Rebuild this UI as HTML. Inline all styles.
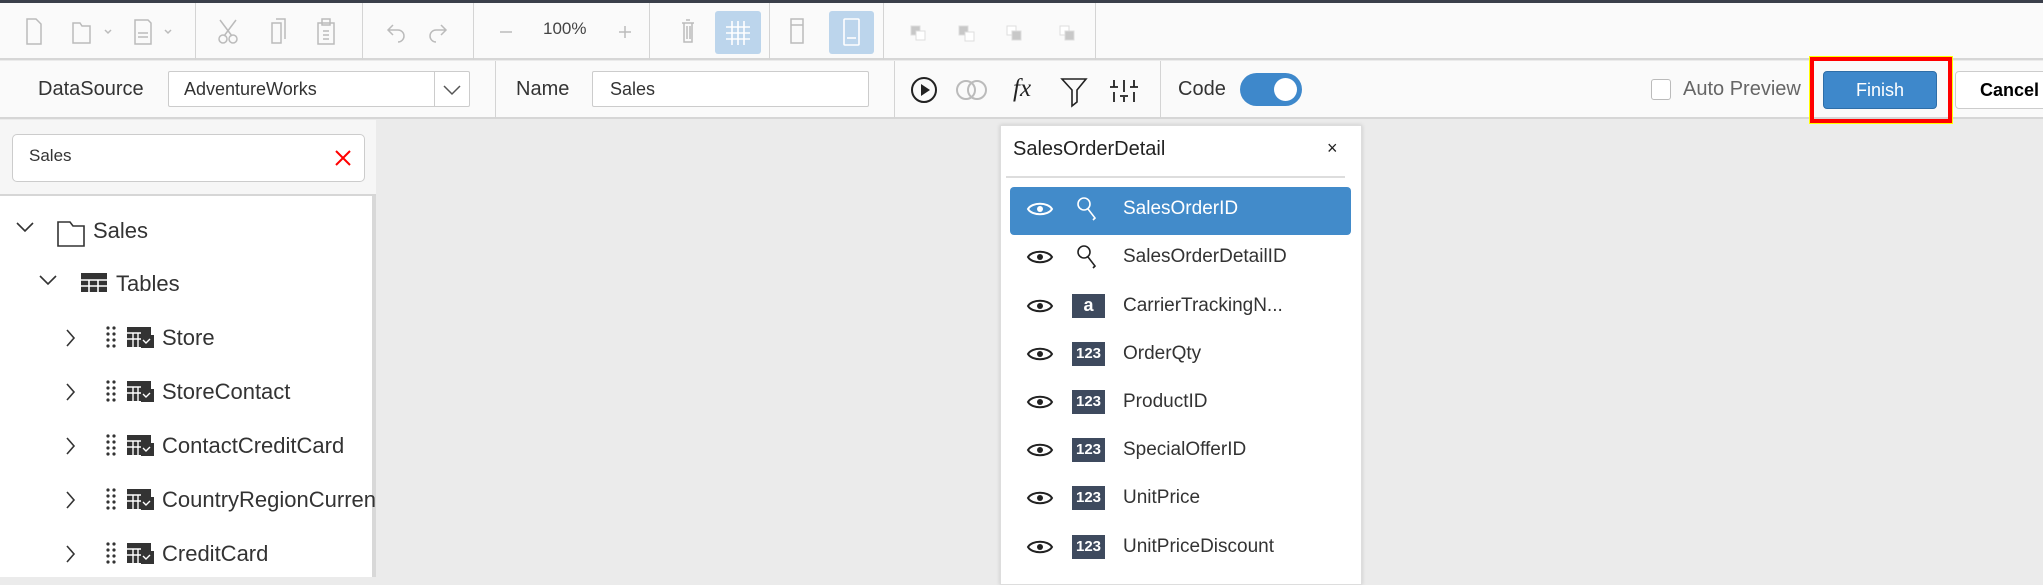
<!DOCTYPE html>
<html><head><meta charset="utf-8"><style>
*{box-sizing:border-box;margin:0;padding:0}
body{width:2043px;height:577px;overflow:hidden;background:#ebebeb;font-family:"Liberation Sans",sans-serif;position:relative}
.a{position:absolute}
.t{font-size:19px;color:#333}
.sep{position:absolute;width:1px;background:#d4d4d4}
.ico{position:absolute}
</style></head><body>
<div class="a" style="left:0;top:0;width:2043px;height:3px;background:#3a3f4a"></div>
<div class="a" style="left:0;top:3px;width:2043px;height:57px;background:#fafafa;border-bottom:2px solid #d6d6d6"></div>
<div class="a" style="left:0;top:61px;width:2043px;height:58px;background:#fafafa;border-bottom:2px solid #d6d6d6"></div>
<!-- row1 separators -->
<div class="sep" style="left:195px;top:3px;height:57px"></div>
<div class="sep" style="left:362px;top:3px;height:57px"></div>
<div class="sep" style="left:473px;top:3px;height:57px"></div>
<div class="sep" style="left:649px;top:3px;height:57px"></div>
<div class="sep" style="left:769px;top:3px;height:57px"></div>
<div class="sep" style="left:883px;top:3px;height:57px"></div>
<div class="sep" style="left:1095px;top:3px;height:57px"></div>
<svg class="ico" style="left:0;top:3px" width="1100" height="57" fill="none" stroke="#bbb" stroke-width="1.5">
<path d="M27 16h9l5 5v20h-14z"/>
<path d="M73 20h7l2 3h8v17h-17z"/><path d="M105 27l3 3 3-3"/>
<path d="M135 17h13l3 3v21h-16zM138 30h10M138 34h10"/><path d="M165 27l3 3 3-3"/>
<circle cx="223" cy="36" r="4"/><circle cx="233" cy="36" r="4"/><path d="M224 33l12-16M232 33l-12-16"/>
<path d="M272 20h9v20h-9zM276 16h9v20"/>
<path d="M318 20h16v21h-16zM322 16h8v6h-8zM323 28h6M323 32h6M323 36h6"/>
<path d="M393 22l-5 5 5 5M388 27h10a6 6 0 0 1 0 12"/>
<path d="M441 22l5 5-5 5M446 27h-10a6 6 0 0 0 0 12"/>
<path d="M500 29h12M619 29h12M625 23v12"/>
<path d="M682 20h12M686 17h4M684 20v19h8v-19M687 23v13M690 23v13"/>
<path d="M791 16h12v24h-12zM791 22h12"/>
</svg>
<div class="a t" style="left:543px;top:19px;font-size:17px;color:#444">100%</div>
<div class="a" style="left:715px;top:11px;width:46px;height:43px;background:#bcd5ec;border-radius:3px"></div>
<svg class="ico" style="left:715px;top:11px" width="46" height="43" stroke="#fff" stroke-width="1.6"><path d="M17 10v24M23 10v24M29 10v24M11 16h24M11 22h24M11 28h24"/></svg>
<div class="a" style="left:829px;top:11px;width:45px;height:43px;background:#bcd5ec;border-radius:3px"></div>
<svg class="ico" style="left:829px;top:11px" width="45" height="43" fill="none" stroke="#fff" stroke-width="1.6"><rect x="15" y="8" width="15" height="26" rx="1"/><path d="M18 27h9"/></svg>
<svg class="ico" style="left:900px;top:3px" width="200" height="57"><g fill="#c8c8c8" stroke="#ddd"><rect x="11" y="23" width="9" height="9"/><rect x="16" y="28" width="9" height="9" fill="#fff"/><rect x="59" y="23" width="9" height="9"/><rect x="65" y="29" width="9" height="9" fill="#fff"/><rect x="107" y="23" width="9" height="9" fill="#fff"/><rect x="112" y="28" width="9" height="9"/><rect x="160" y="23" width="9" height="9" fill="#fff"/><rect x="165" y="28" width="9" height="9"/></g></svg>
<!-- row2 -->
<div class="a t" style="left:38px;top:78px;font-size:20px">DataSource</div>
<div class="a" style="left:168px;top:71px;width:302px;height:36px;border:1px solid #ccc;background:#fff;border-radius:2px"></div>
<div class="a t" style="left:184px;top:79px;font-size:18px">AdventureWorks</div>
<div class="sep" style="left:434px;top:72px;height:34px;background:#ccc"></div>
<svg class="ico" style="left:438px;top:80px" width="30" height="20" fill="none" stroke="#555" stroke-width="1.5"><path d="M6 6l8 8 8-8"/></svg>
<div class="sep" style="left:495px;top:61px;height:57px"></div>
<div class="a t" style="left:516px;top:78px;font-size:20px">Name</div>
<div class="a" style="left:592px;top:71px;width:277px;height:36px;border:1px solid #ccc;background:#fff;border-radius:2px"></div>
<div class="a t" style="left:610px;top:79px;font-size:18px">Sales</div>
<div class="sep" style="left:894px;top:61px;height:57px"></div>
<svg class="ico" style="left:905px;top:71px" width="250" height="38" fill="none" stroke="#222" stroke-width="2"><circle cx="19" cy="19" r="12"/><path d="M16 13v12l9-6z" fill="#222" stroke="none"/>
<circle cx="61" cy="19" r="9" stroke="#bbb"/><circle cx="72" cy="19" r="9" stroke="#bbb"/>
<path d="M157 8h24l-9 11v12l-5 4v-16z" stroke-width="1.6"/>
<path d="M209 9v7M209 21v10M219 9v12M219 26v5M229 9v7M229 21v10M205 16h8M215 25h8M225 16h8" stroke-width="1.8"/></svg>
<div class="a" style="left:1013px;top:75px;font-family:'Liberation Serif',serif;font-style:italic;font-size:25px;color:#222">fx</div>
<div class="sep" style="left:1160px;top:61px;height:57px"></div>
<div class="a t" style="left:1178px;top:78px;font-size:20px">Code</div>
<div class="a" style="left:1240px;top:73px;width:62px;height:33px;background:#3e88cb;border-radius:17px"></div>
<div class="a" style="left:1274px;top:78px;width:23px;height:23px;background:#fff;border-radius:50%"></div>
<div class="a" style="left:1651px;top:79px;width:20px;height:21px;border:1.5px solid #bbb;border-radius:3px;background:#fff"></div>
<div class="a t" style="left:1683px;top:78px;font-size:20px;color:#666">Auto Preview</div>
<div class="a" style="left:1810px;top:57px;width:142px;height:66px;border:4px solid #f00;outline:1px solid #ff0"></div>
<div class="a" style="left:1823px;top:71px;width:114px;height:38px;background:#3e88cb;border:1px solid #2e6ea8;border-radius:4px;color:#fff;font-size:18px;text-align:center;line-height:36px">Finish</div>
<div class="a" style="left:1955px;top:71px;width:100px;height:38px;background:#fff;border:1px solid #ccc;border-radius:4px;color:#000;font-size:18px;font-weight:bold;line-height:36px;padding-left:24px">Cancel</div>
<!-- left panel -->
<div class="a" style="left:0;top:120px;width:376px;height:457px;background:#fff;border-right:4px solid #d8d8d8"></div>
<div class="a" style="left:0;top:120px;width:376px;height:76px;background:#f6f6f6;border-bottom:2px solid #d6d6d6"></div>
<div class="a" style="left:12px;top:134px;width:353px;height:48px;background:#fff;border:1.5px solid #ccc;border-radius:5px"></div>
<div class="a t" style="left:29px;top:146px;font-size:17px;color:#333">Sales</div>
<svg class="ico" style="left:333px;top:148px" width="20" height="20" stroke="#f00" stroke-width="2"><path d="M3 3l14 14M17 3l-14 14"/></svg>
<svg class="ico" style="left:0;top:196px" width="376" height="381" fill="none" stroke="#333" stroke-width="1.6">
<path d="M17 27l8 8 8-8"/><path d="M58 26h12l3 4h11v20h-26z"/>
<path d="M40 80l8 8 8-8"/><rect x="81" y="77" width="26" height="19" fill="#333" stroke="none"/><path d="M81 84h26M81 90h26M89 84v12M98 84v12" stroke="#fff"/>
</svg>
<div class="a t" style="left:93px;top:218px;font-size:22px">Sales</div>
<div class="a t" style="left:116px;top:271px;font-size:22px">Tables</div>
<svg class="ico" style="left:0;top:300px" width="376" height="277" fill="none" stroke="#333" stroke-width="1.6">
<defs><g id="row"><path d="M67 -8l7 8-7 8"/><g fill="#333" stroke="none"><circle cx="108" cy="-10" r="1.6"/><circle cx="114" cy="-10" r="1.6"/><circle cx="108" cy="-4" r="1.6"/><circle cx="114" cy="-4" r="1.6"/><circle cx="108" cy="2" r="1.6"/><circle cx="114" cy="2" r="1.6"/><circle cx="108" cy="8" r="1.6"/><circle cx="114" cy="8" r="1.6"/><rect x="127" y="-11" width="24" height="20"/><rect x="141" y="-3" width="13" height="13"/></g><path d="M127 -5h14M127 1h14M133 -5v14M138 -5v14M143 2l3 3 4-4" stroke="#fff" stroke-width="1.4"/></g></defs>
<use href="#row" y="38"/><use href="#row" y="92"/><use href="#row" y="146"/><use href="#row" y="200"/><use href="#row" y="254"/>
</svg>
<div class="a t" style="left:162px;top:325px;font-size:22px">Store</div>
<div class="a t" style="left:162px;top:379px;font-size:22px">StoreContact</div>
<div class="a t" style="left:162px;top:433px;font-size:22px">ContactCreditCard</div>
<div class="a t" style="left:162px;top:487px;font-size:22px;white-space:nowrap;width:213px;overflow:hidden">CountryRegionCurrency</div>
<div class="a t" style="left:162px;top:541px;font-size:22px">CreditCard</div>
<!-- popup -->
<div class="a" style="left:1000px;top:125px;width:362px;height:460px;background:#fff;border:1px solid #ddd;box-shadow:0 0 4px rgba(0,0,0,.15)"></div>
<div class="a t" style="left:1013px;top:138px;font-size:20px;color:#222">SalesOrderDetail</div>
<div class="a" style="left:1327px;top:138px;font-size:18px;color:#222">×</div>
<div class="a" style="left:1006px;top:176px;width:339px;height:2px;background:#ddd"></div>
<div class="a" style="left:1010px;top:187px;width:341px;height:48px;background:#428bca;border-radius:4px"></div>
<svg class="ico" style="left:1000px;top:185px" width="120" height="392">
<defs>
<g id="eye"><path d="M28 0c4-7 20-7 24 0c-4 7-20 7-24 0z" fill="none" stroke="currentColor" stroke-width="2"/><circle cx="40" cy="0" r="3" fill="currentColor"/></g>
<g id="key"><circle cx="84" cy="-5" r="6" fill="none" stroke="currentColor" stroke-width="1.6"/><path d="M88 0l7 9-2 2" fill="none" stroke="currentColor" stroke-width="1.6"/></g>
</defs>
<g color="#fff"><use href="#eye" y="24"/><use href="#key" y="24"/></g>
<g color="#222"><use href="#eye" y="72"/><use href="#key" y="72"/>
<use href="#eye" y="121"/><use href="#eye" y="169"/><use href="#eye" y="217"/><use href="#eye" y="265"/><use href="#eye" y="313"/><use href="#eye" y="362"/></g>
</svg>
<div class="a" style="left:1072px;top:294px;width:33px;height:24px;background:#3e4a5e;color:#fff;font-size:18px;font-weight:bold;text-align:center;line-height:22px">a</div>
<div class="a" style="left:1072px;top:342px;width:33px;height:24px;background:#3e4a5e;color:#fff;font-size:15px;font-weight:bold;text-align:center;line-height:24px">123</div>
<div class="a" style="left:1072px;top:390px;width:33px;height:24px;background:#3e4a5e;color:#fff;font-size:15px;font-weight:bold;text-align:center;line-height:24px">123</div>
<div class="a" style="left:1072px;top:438px;width:33px;height:24px;background:#3e4a5e;color:#fff;font-size:15px;font-weight:bold;text-align:center;line-height:24px">123</div>
<div class="a" style="left:1072px;top:486px;width:33px;height:24px;background:#3e4a5e;color:#fff;font-size:15px;font-weight:bold;text-align:center;line-height:24px">123</div>
<div class="a" style="left:1072px;top:535px;width:33px;height:24px;background:#3e4a5e;color:#fff;font-size:15px;font-weight:bold;text-align:center;line-height:24px">123</div>
<div class="a t" style="left:1123px;top:198px;font-size:19px;color:#fff">SalesOrderID</div>
<div class="a t" style="left:1123px;top:246px;font-size:19px">SalesOrderDetailID</div>
<div class="a t" style="left:1123px;top:295px;font-size:19px">CarrierTrackingN...</div>
<div class="a t" style="left:1123px;top:343px;font-size:19px">OrderQty</div>
<div class="a t" style="left:1123px;top:391px;font-size:19px">ProductID</div>
<div class="a t" style="left:1123px;top:439px;font-size:19px">SpecialOfferID</div>
<div class="a t" style="left:1123px;top:487px;font-size:19px">UnitPrice</div>
<div class="a t" style="left:1123px;top:536px;font-size:19px">UnitPriceDiscount</div>
</body></html>
